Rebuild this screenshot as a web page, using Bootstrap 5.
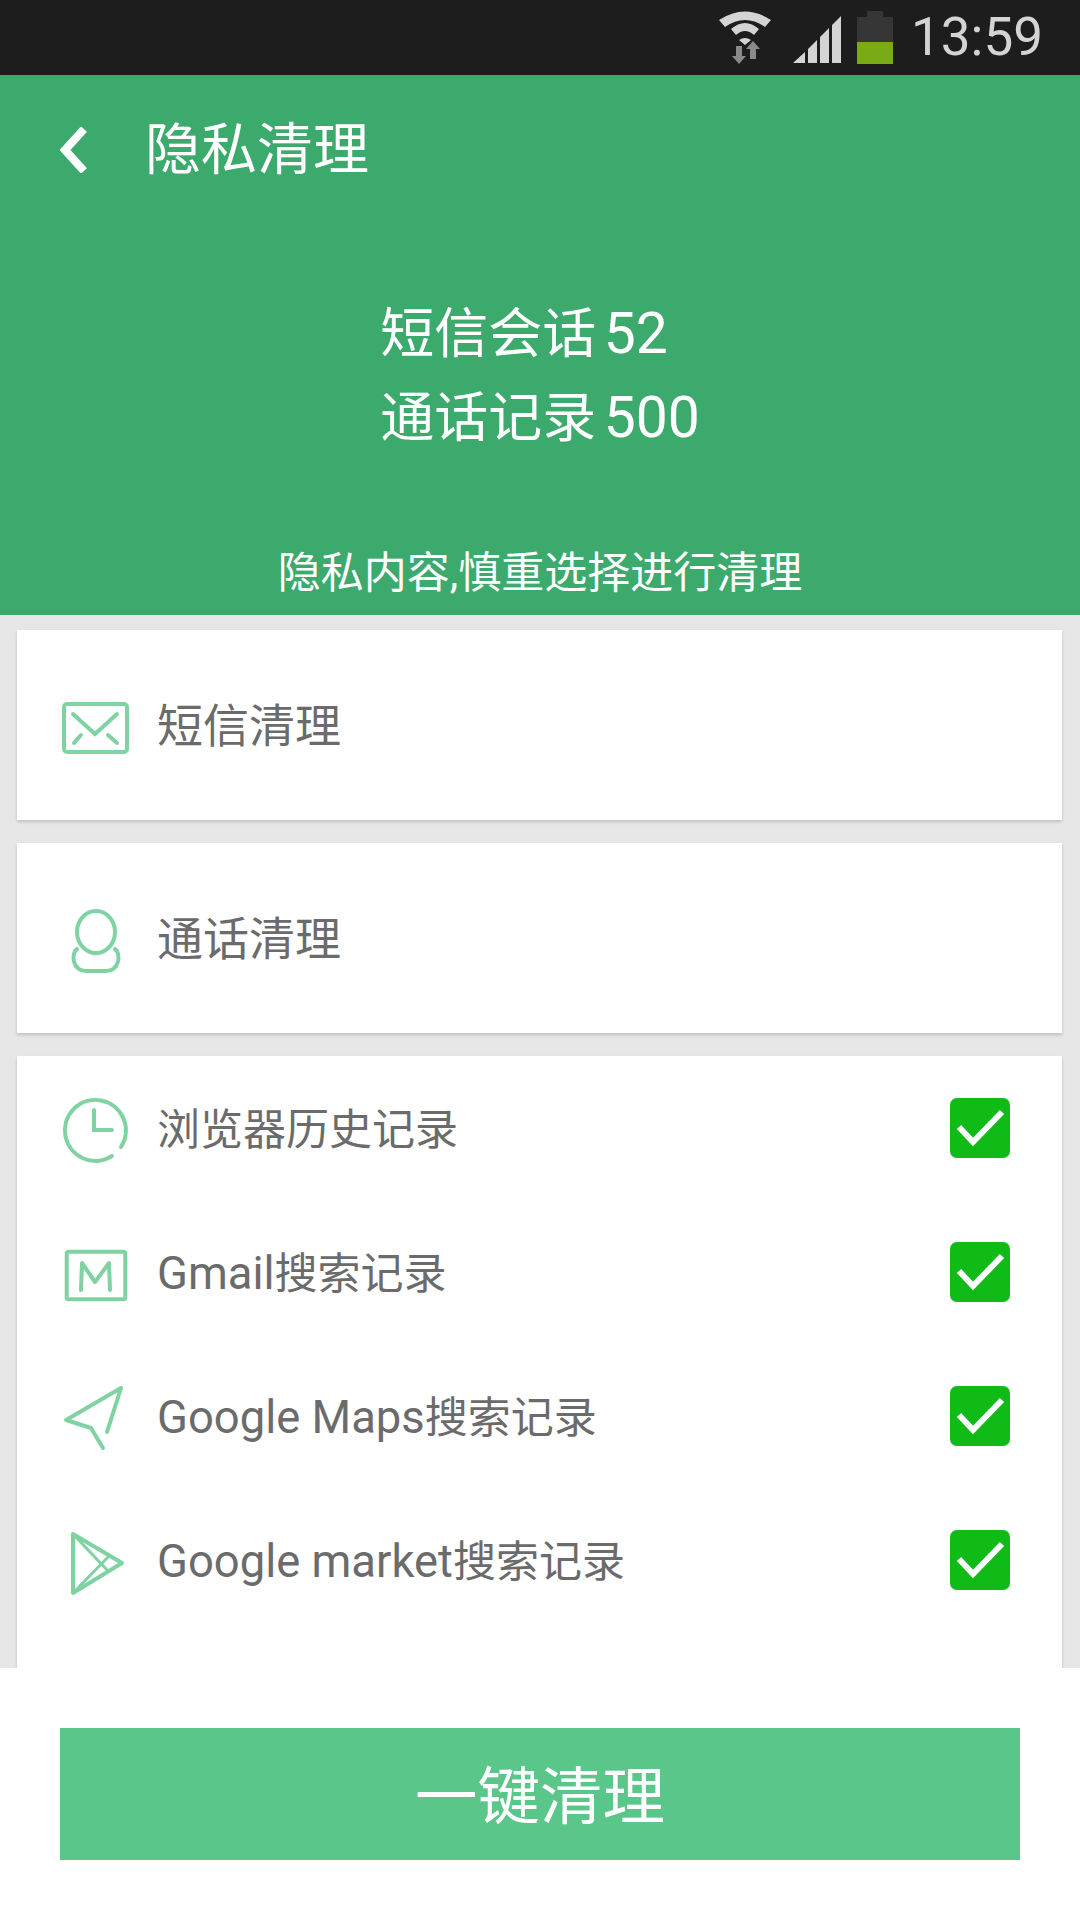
<!DOCTYPE html>
<html lang="zh">
<head>
    <meta charset="UTF-8" />
    <meta name="viewport" content="width=device-width, initial-scale=1.0"/>
    <title>隐私清理</title>
    <link href="https://cdn.jsdelivr.net/npm/bootstrap@5.3.1/dist/css/bootstrap.min.css" rel="stylesheet"/>
    <style>
        body { width: 1080px; height: 1920px; overflow: hidden; background: #fff; font-family: Roboto, "Noto Sans CJK SC", sans-serif; }
        .status-top { height: 75px; background: #1d1d1d; color: #d4d4d4; padding-right: 37px; }
        .status-wifi { margin-right: 22px; }
        .status-signal { margin-right: 16px; margin-top: 4px; }
        .status-time { font-size: 53px; line-height: 75px; margin-left: 18px; }
        .hero { height: 540px; background: #3daa6d; color: #fff; }
        .hero-nav { height: 150px; padding-left: 60px; }
        .hero-title { font-size: 56px; margin-left: 58px; line-height: 1; }
        .hero-count { font-size: 54px; line-height: 83px; margin-top: 67px; word-spacing: -6px; }
        .count-num { font-size: 57px; }
        .hero-note { font-size: 43px; line-height: 1; margin-top: 92px; }
        .page-body { height: 1053px; background: #e6e6e6; padding: 15px 18px 0 17px; overflow: hidden; }
        .clean-card { border: 0; border-radius: 0; box-shadow: 0 2px 3px rgba(0,0,0,.16); color: #6b6b6b; }
        .clean-single { height: 190px; margin-bottom: 23px; font-size: 46px; padding-left: 45px; }
        .clean-single svg { margin-right: 28px; margin-top: 6px; }
        .clean-single span { padding-top: 2px; }
        .clean-list { height: 640px; padding: 10px 0 0 45px; }
        .clean-row { height: 144px; font-size: 43px; padding-bottom: 20px; padding-right: 52px; }
        .row-icon { margin-right: 28px; flex: none; }
        .row-text { padding-top: 4px; }
        .latin-text { font-size: 45.4px; }
        .check-box { flex: none; }
        .page-foot { height: 252px; background: #fff; padding: 60px 60px 0; }
        .clean-btn { height: 132px; width: 960px; background: #5ac689; color: #fff; font-size: 62.5px; border: 0; border-radius: 0; padding: 8px 0 0; line-height: 1; }
    </style>
</head>
<body>
<div class="d-flex flex-column">
    <div class="status-top d-flex justify-content-end align-items-center">
        <svg class="status-wifi" width="52" height="54" viewBox="0 0 52 54">
            <path d="M0 9 Q26 -8 52 9 L46 16 Q26 2 6 16 Z" fill="#d4d4d4"/>
            <path d="M12 18 Q26 6 40 18 L35 24 Q26 16 17 24 Z" fill="#d4d4d4"/>
            <path d="M20 29 Q26 25 32 29 L26 34 Z" fill="#d4d4d4"/>
            <path d="M17 35 H23 V45 H27 L20 53 L13 45 H17 Z" fill="#8a8a8a"/>
            <path d="M34 30 L41 38 H37 V48 H31 V38 H27 Z" fill="#8a8a8a"/>
        </svg>
        <svg class="status-signal" width="48" height="47" viewBox="0 0 48 47">
            <path d="M0 47 L12 36 V47 Z M15 33 L24 24 V47 H15 Z M27 21 L36 12 V47 H27 Z M39 9 L48 0 V47 H39 Z" fill="#d4d4d4"/>
        </svg>
        <svg width="36" height="53" viewBox="0 0 36 53">
            <rect x="10" y="0" width="16" height="6" fill="#363636"/>
            <rect x="0" y="6" width="36" height="25" fill="#363636"/>
            <rect x="0" y="31" width="36" height="22" fill="#7aaa15"/>
        </svg>
        <span class="status-time">13:59</span>
    </div>

    <div class="hero">
        <div class="hero-nav d-flex align-items-center">
            <svg width="27" height="46" viewBox="0 0 27 46">
                <path d="M24 2 L5 23 L24 44" fill="none" stroke="#fff" stroke-width="8"/>
            </svg>
            <span class="hero-title">隐私清理</span>
        </div>
        <div class="d-flex justify-content-center">
            <div class="hero-count">
                <div>短信会话 <span class="count-num">52</span></div>
                <div>通话记录 <span class="count-num">500</span></div>
            </div>
        </div>
        <div class="hero-note text-center">隐私内容,慎重选择进行清理</div>
    </div>

    <div class="page-body">
        <div class="card clean-card clean-single flex-row align-items-center">
            <svg width="67" height="52" viewBox="0 0 67 52" fill="none" stroke="#7fd3a3" stroke-width="4" stroke-linecap="round">
                <rect x="2" y="2" width="63" height="48" rx="3"/>
                <path d="M11 12 L33 32 L55 12 M12 41 L19 33 M46 33 L55 41"/>
            </svg>
            <span>短信清理</span>
        </div>
        <div class="card clean-card clean-single flex-row align-items-center">
            <svg width="67" height="64" viewBox="0 0 67 64" fill="none" stroke="#7fd3a3" stroke-width="4" stroke-linecap="round">
                <ellipse cx="34" cy="23" rx="19" ry="21"/>
                <path d="M15 40 C9 44 10 62 24 62 H44 C58 62 59 44 53 40"/>
            </svg>
            <span>通话清理</span>
        </div>
        <div class="card clean-card clean-list">
            <div class="clean-row d-flex align-items-center">
                <svg class="row-icon" width="67" height="72" viewBox="0 0 67 72" fill="none" stroke="#7fd3a3" stroke-width="4" stroke-linecap="round">
                    <path d="M50 64 A30.5 30.5 0 1 1 59 55"/>
                    <path d="M32 18 V38 H50"/>
                </svg>
                <span class="row-text flex-grow-1">浏览器历史记录</span>
                <svg class="check-box" width="60" height="60" viewBox="0 0 60 60">
                    <rect width="60" height="60" rx="7" fill="#10bb17"/>
                    <path d="M9 29 L23 44 L52 14" fill="none" stroke="#fff" stroke-width="6"/>
                </svg>
            </div>
            <div class="clean-row d-flex align-items-center">
                <svg class="row-icon" width="67" height="72" viewBox="0 0 67 72" fill="none" stroke="#7fd3a3" stroke-width="4" stroke-linecap="round" stroke-linejoin="round">
                    <rect x="4.7" y="15.7" width="58.6" height="47.6" rx="2"/>
                    <path d="M19 54 L20 27 L33 46 L47 27 L48 54"/>
                </svg>
                <span class="row-text flex-grow-1"><span class="latin-text">Gmail</span>搜索记录</span>
                <svg class="check-box" width="60" height="60" viewBox="0 0 60 60">
                    <rect width="60" height="60" rx="7" fill="#10bb17"/>
                    <path d="M9 29 L23 44 L52 14" fill="none" stroke="#fff" stroke-width="6"/>
                </svg>
            </div>
            <div class="clean-row d-flex align-items-center">
                <svg class="row-icon" width="67" height="72" viewBox="0 0 67 72" fill="none" stroke="#7fd3a3" stroke-width="4" stroke-linecap="round" stroke-linejoin="round">
                    <path d="M45 52 L59 8 L4 40 L29 48 L41 68"/>
                </svg>
                <span class="row-text flex-grow-1"><span class="latin-text">Google Maps</span>搜索记录</span>
                <svg class="check-box" width="60" height="60" viewBox="0 0 60 60">
                    <rect width="60" height="60" rx="7" fill="#10bb17"/>
                    <path d="M9 29 L23 44 L52 14" fill="none" stroke="#fff" stroke-width="6"/>
                </svg>
            </div>
            <div class="clean-row d-flex align-items-center">
                <svg class="row-icon" width="67" height="72" viewBox="0 0 67 72" fill="none" stroke="#7fd3a3" stroke-width="3" stroke-linejoin="round">
                    <path d="M11 10 V69 L60 39 Z" stroke-width="4"/>
                    <path d="M11 10 L46 47 M11 69 L48 31"/>
                </svg>
                <span class="row-text flex-grow-1"><span class="latin-text">Google market</span>搜索记录</span>
                <svg class="check-box" width="60" height="60" viewBox="0 0 60 60">
                    <rect width="60" height="60" rx="7" fill="#10bb17"/>
                    <path d="M9 29 L23 44 L52 14" fill="none" stroke="#fff" stroke-width="6"/>
                </svg>
            </div>
        </div>
    </div>

    <div class="page-foot">
        <button type="button" class="btn clean-btn">一键清理</button>
    </div>
</div>
</body>
</html>
